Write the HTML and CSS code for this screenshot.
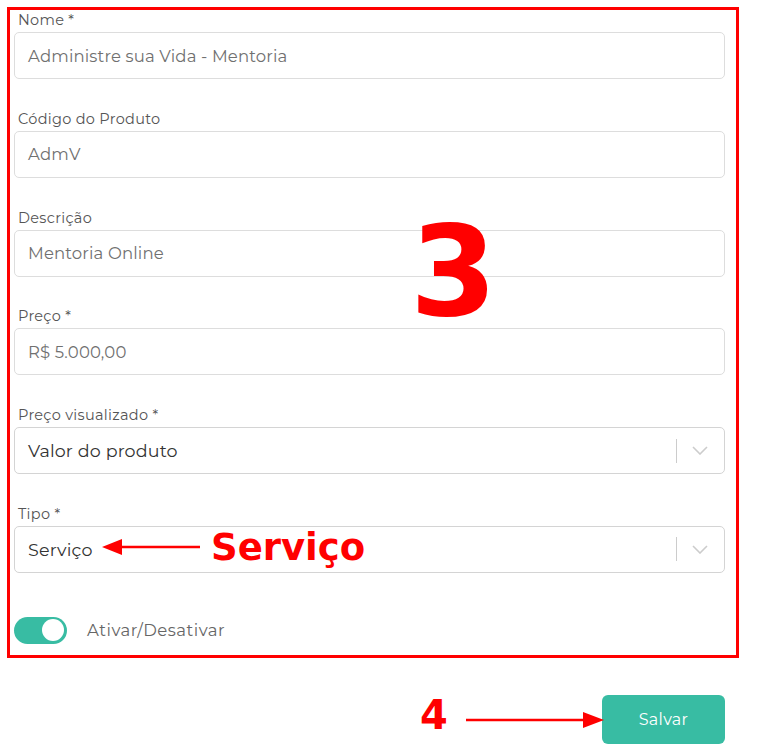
FILE: index.html
```html
<!DOCTYPE html>
<html lang="pt-BR">
<head>
    <meta charset="UTF-8">
    <meta name="viewport" content="width=device-width, initial-scale=1.0">
    <title>Produto</title>
    <link rel="stylesheet" href="styles.css">
</head>
<body>
    <div class="page">
        <div class="form-box">
            <div class="field">
                <label class="field-label">Nome *</label>
                <div class="text-input">Administre sua Vida - Mentoria</div>
            </div>
            <div class="field">
                <label class="field-label">Código do Produto</label>
                <div class="text-input">AdmV</div>
            </div>
            <div class="field">
                <label class="field-label">Descrição</label>
                <div class="text-input">Mentoria Online</div>
            </div>
            <div class="field">
                <label class="field-label">Preço *</label>
                <div class="text-input">R$ 5.000,00</div>
            </div>
            <div class="field">
                <label class="field-label">Preço visualizado *</label>
                <div class="select-input">
                    <span class="select-value">Valor do produto</span>
                    <span class="select-separator"></span>
                    <svg class="select-chevron" width="16" height="9" viewBox="0 0 16 9">
                        <polyline points="1,1 8,8 15,1" fill="none" stroke="#cccccc" stroke-width="1.6"/>
                    </svg>
                </div>
            </div>
            <div class="field field-last">
                <label class="field-label">Tipo *</label>
                <div class="select-input">
                    <span class="select-value">Serviço</span>
                    <span class="select-separator"></span>
                    <svg class="select-chevron" width="16" height="9" viewBox="0 0 16 9">
                        <polyline points="1,1 8,8 15,1" fill="none" stroke="#cccccc" stroke-width="1.6"/>
                    </svg>
                </div>
            </div>
            <div class="toggle-row">
                <span class="toggle on"><span class="toggle-knob"></span></span>
                <span class="toggle-label">Ativar/Desativar</span>
            </div>
        </div>

        <div class="actions">
            <button class="btn-save">Salvar</button>
        </div>

        <!-- annotations -->
        <span class="note note-3">3</span>
        <span class="note note-servico">Serviço</span>
        <svg class="arrow arrow-servico" width="100" height="18" viewBox="0 0 100 18">
            <line x1="16" y1="9" x2="98" y2="9" stroke="#ff0000" stroke-width="2.5"/>
            <polygon points="0,9 20,1 20,17" fill="#ff0000"/>
        </svg>
        <span class="note note-4">4</span>
        <svg class="arrow arrow-save" width="138" height="18" viewBox="0 0 138 18">
            <line x1="0" y1="9" x2="122" y2="9" stroke="#ff0000" stroke-width="2.5"/>
            <polygon points="138,9 117,1 117,17" fill="#ff0000"/>
        </svg>
    </div>
</body>
</html>
```

FILE: styles.css
```css
* {
    margin: 0;
    padding: 0;
    box-sizing: border-box;
}

body {
    font-family: Montserrat, 'Open Sans', sans-serif;
    background-color: #ffffff;
    color: #555555;
}

.page {
    position: relative;
    width: 757px;
    min-height: 754px;
    padding-top: 7px;
    padding-left: 7px;
}

.form-box {
    width: 732px;
    border: 3px solid #ff0000;
    padding: 0 11px 11px 4px;
}

.field {
    margin-bottom: 29.8px;
}

.field-last {
    margin-bottom: 44px;
}

.field-label {
    display: block;
    font-size: 14.5px;
    letter-spacing: 0.3px;
    line-height: 20px;
    margin-bottom: 2px;
    padding-left: 4px;
    color: #555555;
}

.text-input,
.select-input {
    height: 47px;
    border: 1px solid #dddddd;
    border-radius: 5px;
    display: flex;
    align-items: center;
    padding-left: 13px;
    font-size: 16.5px;
    letter-spacing: 0.15px;
    color: #707070;
}

.select-input {
    border-color: #d4d4d4;
    padding-right: 16px;
}

.select-value {
    flex: 1;
    font-size: 17.5px;
    color: #333333;
}

.select-separator {
    width: 1px;
    height: 24px;
    background-color: #cccccc;
    margin-right: 15px;
}

.select-chevron {
    display: block;
}

.toggle-row {
    display: flex;
    align-items: center;
    gap: 20px;
}

.toggle {
    width: 53px;
    height: 27px;
    border-radius: 14px;
    background-color: #cccccc;
    display: flex;
    align-items: center;
    padding: 0 3px;
}

.toggle.on {
    background-color: #38bca3;
    justify-content: flex-end;
}

.toggle-knob {
    width: 22px;
    height: 22px;
    border-radius: 50%;
    background-color: #ffffff;
}

.toggle-label {
    font-size: 16.5px;
    letter-spacing: 0.5px;
    color: #666666;
}

.actions {
    display: flex;
    justify-content: flex-end;
    width: 718px;
    margin-top: 37px;
}

.btn-save {
    width: 123px;
    height: 49px;
    border: none;
    border-radius: 6px;
    background-color: #38bca3;
    color: #ffffff;
    font-family: inherit;
    font-size: 16px;
    letter-spacing: 0.3px;
}

/* annotations */
.note {
    position: absolute;
    font-family: 'DejaVu Sans', Verdana, sans-serif;
    font-weight: bold;
    color: #ff0000;
    line-height: 1;
}

.note-3 {
    left: 410px;
    top: 209px;
    font-size: 125px;
}

.note-servico {
    left: 211px;
    top: 529px;
    font-size: 37px;
}

.note-4 {
    left: 420px;
    top: 695px;
    font-size: 40px;
}

.arrow {
    position: absolute;
    display: block;
}

.arrow-servico {
    left: 102px;
    top: 538px;
}

.arrow-save {
    left: 466px;
    top: 711px;
}
```
